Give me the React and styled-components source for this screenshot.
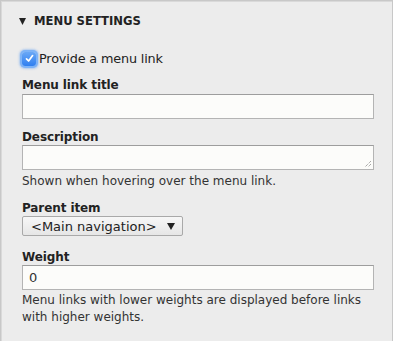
import React from "react";
import styled, { createGlobalStyle } from "styled-components";

const Global = createGlobalStyle`
  html, body { margin: 0; padding: 0; background: #ffffff; }
  body { font-family: "DejaVu Sans", "Liberation Sans", sans-serif; }
  * { box-sizing: border-box; }
`;

const Panel = styled.section`
  width: 393px;
  height: 341px;
  background: #ececec;
  border: 1px solid #c8c8c8;
  border-bottom: none;
  box-shadow: inset 1px 1px 0 #d9d9d9;
  padding: 13px 20px 0 21px;
  color: #222;
`;

const Summary = styled.div`
  display: flex;
  align-items: center;
  gap: 8px;
  margin-left: -3px;
  height: 14px;
  font-size: 11.6px;
  font-weight: bold;
  letter-spacing: 0;
  text-transform: uppercase;
  color: #222;
`;

const Arrow = styled.svg`
  width: 7px;
  height: 7px;
  flex: none;
`;

const CheckRow = styled.label`
  display: flex;
  align-items: center;
  gap: 3px;
  margin-top: 23px;
  font-size: 12.8px;
  letter-spacing: -0.15px;
  color: #222;
`;

const CheckBox = styled.span`
  width: 14px;
  height: 14px;
  border-radius: 3px;
  background: linear-gradient(#6aa8f6, #2f7ff0);
  box-shadow: 0 0 0 2px #7db3f7, 0 0 2px 3px rgba(100, 160, 240, 0.45);
  display: flex;
  align-items: center;
  justify-content: center;
  flex: none;
`;

const Field = styled.div`
  display: flex;
  flex-direction: column;
  margin-top: ${(p) => p.$top}px;
`;

const Label = styled.div`
  font-size: 12px;
  font-weight: bold;
  letter-spacing: -0.1px;
  color: #222;
  height: 17px;
  padding-top: ${(p) => p.$shift ?? 2}px;
  line-height: 15px;
  margin-bottom: 0;
`;

const TextInput = styled.div`
  width: 352px;
  height: 25px;
  background: #fcfcfa;
  border: 1px solid #b4b4b4;
  border-top-color: #9d9d9d;
  padding: 0 6px;
  display: flex;
  align-items: center;
  font-size: 13px;
  color: #333;
`;

const TextArea = styled(TextInput)`
  position: relative;
`;

const Grip = styled.svg`
  position: absolute;
  right: 1px;
  bottom: 1px;
  width: 8px;
  height: 8px;
`;

const Help = styled.div`
  font-size: 12px;
  letter-spacing: 0;
  line-height: 17px;
  color: #333;
  margin-top: ${(p) => p.$top ?? 2}px;
`;

const Select = styled.div`
  width: 161px;
  height: 20px;
  border: 1px solid #a9a9a9;
  border-radius: 2px;
  background: linear-gradient(#f7f7f7, #e6e6e6);
  display: flex;
  align-items: center;
  justify-content: space-between;
  padding: 0 7px 0 8px;
  font-size: 13px;
  color: #222;
`;

export default function App() {
  return (
    <>
      <Global />
      <Panel>
        <Summary>
          <Arrow viewBox="0 0 7 7">
            <polygon points="0,0 7,0 3.5,7" fill="#222" />
          </Arrow>
          Menu settings
        </Summary>
        <CheckRow>
          <CheckBox>
            <svg width="9" height="9" viewBox="0 0 9 9">
              <path d="M1.5 4.8 L3.6 7 L7.6 1.6" stroke="#fff" strokeWidth="1.7" fill="none" strokeLinecap="round" strokeLinejoin="round" />
            </svg>
          </CheckBox>
          Provide a menu link
        </CheckRow>
        <Field $top={11}>
          <Label $shift={1}>Menu link title</Label>
          <TextInput />
        </Field>
        <Field $top={9}>
          <Label>Description</Label>
          <TextArea>
            <Grip viewBox="0 0 8 8">
              <path d="M7 1 L1 7 M7 4 L4 7" stroke="#777" strokeWidth="0.9" strokeDasharray="1 1" />
            </Grip>
          </TextArea>
          <Help $top={3}>Shown when hovering over the menu link.</Help>
        </Field>
        <Field $top={9}>
          <Label>Parent item</Label>
          <Select>
            <span>&lt;Main navigation&gt;</span>
            <svg width="8" height="7" viewBox="0 0 8 7">
              <polygon points="0,0 8,0 4,7" fill="#222" />
            </svg>
          </Select>
        </Field>
        <Field $top={12}>
          <Label>Weight</Label>
          <TextInput>0</TextInput>
          <Help $top={2}>
            Menu links with lower weights are displayed before links with higher weights.
          </Help>
        </Field>
      </Panel>
    </>
  );
}
